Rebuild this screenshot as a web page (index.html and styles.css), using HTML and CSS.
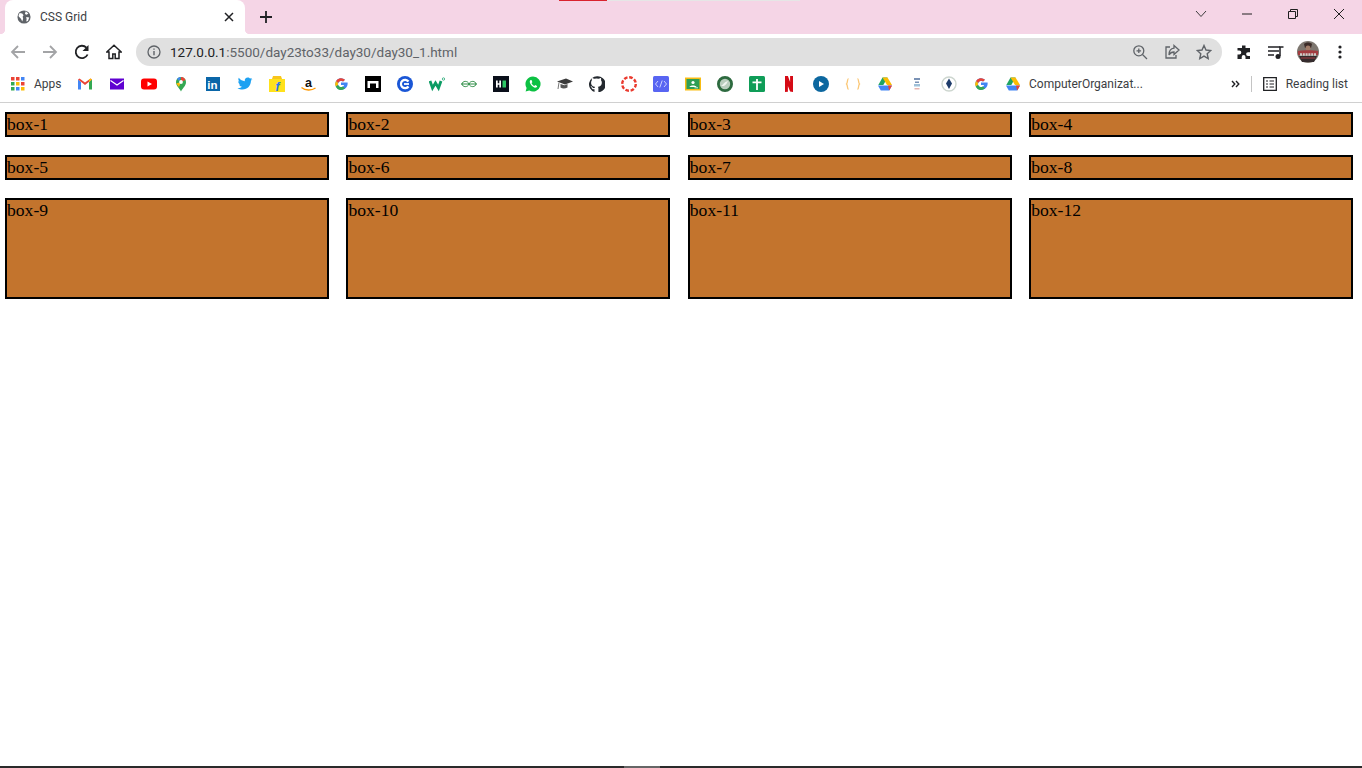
FILE: index.html
```html
<!DOCTYPE html>
<html lang="en">
<head>
  <meta charset="UTF-8" />
  <meta name="viewport" content="width=device-width, initial-scale=1.0" />
  <title>CSS Grid</title>
  <link rel="stylesheet" href="styles.css">
</head>
<body>
  <!-- shared logos -->
  <svg class="sprite">
    <symbol id="google" viewBox="0 0 16 16">
      <path d="M8 6.500h6.600c.5 3.900-2.200 7.300-6.600 7.300A5.800 5.800 0 1 1 12 3.700l-1.900 1.900A3.100 3.100 0 1 0 11.100 9H8z" fill="#4285f4"/>
      <path d="M3 5.100A5.800 5.800 0 0 1 12 3.700l-1.900 1.900A3.100 3.100 0 0 0 5.100 6.900z" fill="#ea4335"/>
      <path d="M2.700 10.500A5.800 5.800 0 0 1 3 5.100l2.100 1.800a3.100 3.100 0 0 0 0 2z" fill="#fbbc05"/>
      <path d="M2.700 10.500l2.400-1.600a3.100 3.100 0 0 0 4.800 1.600l2.200 1.800A5.800 5.800 0 0 1 2.700 10.500z" fill="#34a853"/>
    </symbol>
    <symbol id="drive" viewBox="0 0 16 16">
      <path d="M5.500 1.500h5L6.300 9H1.300z" fill="#1fa463"/>
      <path d="M10.500 1.500L15 9h-5L5.500 1.500z" fill="#fbbc04"/>
      <path d="M3.800 14.500L1 9.500h14l-2.800 5z" fill="#4285f4"/>
      <path d="M11 9.500h4l-2.800 5z" fill="#ea4335"/>
    </symbol>
  </svg>

  <div class="strip"><span class="strip-red"></span></div>

  <header class="titlebar">
    <div class="tab">
      <svg class="tab-icon" viewBox="0 0 16 16">
        <circle cx="8" cy="8" r="7.500" fill="#5f6368"/>
        <path d="M3 3.500l3 .5 1.500 2-1 1.500L7 10l-1 3-1.500-3L2 7.500 1.800 6zM10 1.500l3 2.500-2 1.500-2-1zM10.500 8l3.500.5-1.500 4-2 .5 .5-2.500z" fill="#fff"/>
      </svg>
      <span class="tab-title">CSS Grid</span>
      <svg class="tab-close" viewBox="0 0 10 10"><path d="M1 1l8 8M9 1l-8 8" stroke="#202124" stroke-width="1.500"/></svg>
    </div>
    <div class="new-tab">
      <svg viewBox="0 0 12 12"><path d="M6 0v12M0 6h12" stroke="#202124" stroke-width="1.800"/></svg>
    </div>
    <div class="win-controls">
      <div class="win-btn"><svg viewBox="0 0 12 12"><path d="M1 3l5 5.500L11 3" fill="none" stroke="#3c3c3c"/></svg></div>
      <div class="win-btn"><svg viewBox="0 0 12 12"><path d="M1 6h10" stroke="#202020"/></svg></div>
      <div class="win-btn"><svg viewBox="0 0 12 12"><path d="M1.500 3.500h7v7h-7zM3.500 3.500v-2h7v7h-2" fill="none" stroke="#202020"/></svg></div>
      <div class="win-btn"><svg viewBox="0 0 12 12"><path d="M1 1l10 10M11 1L1 11" stroke="#202020"/></svg></div>
    </div>
  </header>

  <nav class="toolbar">
    <div class="tool"><svg viewBox="0 0 16 16"><path d="M15 8H2M8 2L2 8l6 6" fill="none" stroke="#a3a4a6" stroke-width="1.800"/></svg></div>
    <div class="tool"><svg viewBox="0 0 16 16"><path d="M1 8h13M8 2l6 6-6 6" fill="none" stroke="#a3a4a6" stroke-width="1.800"/></svg></div>
    <div class="tool"><svg viewBox="0 0 16 16"><path d="M13.600 10.500A6.200 6.200 0 1 1 12.400 3.600" fill="none" stroke="#202124" stroke-width="1.800"/><path d="M14.500 1v6h-6z" fill="#202124"/></svg></div>
    <div class="tool"><svg viewBox="0 0 16 16"><path d="M8 1.200L.8 8H3v6.500h3.800V10h2.400v4.500H13V8h2.200z" fill="none" stroke="#202124" stroke-width="1.500"/></svg></div>
    <div class="omnibox">
      <svg class="omni-info" viewBox="0 0 14 14"><circle cx="7" cy="7" r="6" fill="none" stroke="#5f6368" stroke-width="1.300"/><path d="M7 6v4.200M7 3.500v1.300" stroke="#5f6368" stroke-width="1.400"/></svg>
      <div class="url"><span class="url-host">127.0.0.1</span>:5500/day23to33/day30/day30_1.html</div>
      <div class="omni-actions">
        <svg viewBox="0 0 16 16"><circle cx="6.800" cy="6.800" r="5" fill="none" stroke="#5f6368" stroke-width="1.300"/><path d="M10.500 10.500l4.500 4.500M4.500 6.800h4.600M6.800 4.500v4.600" stroke="#5f6368" stroke-width="1.300"/></svg>
        <svg viewBox="0 0 16 16"><path d="M6 3H2v11h10v-3" fill="none" stroke="#5f6368" stroke-width="1.300"/><path d="M10 1.500L15 6l-5 4.500V8C7.500 8 6 9 5 11c0-4 2-6.500 5-6.800z" fill="none" stroke="#5f6368" stroke-width="1.300"/></svg>
        <svg viewBox="0 0 16 16"><path d="M8 1.500l2 4.500 4.800.5-3.600 3.200 1 4.800L8 12.100l-4.200 2.400 1-4.800L1.200 6.500 6 6z" fill="none" stroke="#5f6368" stroke-width="1.400"/></svg>
      </div>
    </div>
    <div class="tool"><svg viewBox="0 0 16 16"><path d="M6 1.500h3.500V4H14v4.200h-2a1.900 1.900 0 0 0 0 3.800h2V15H9.500v-2a1.900 1.900 0 0 0-3.800 0v2H1.500v-4.500h1.800a2 2 0 0 0 0-4H1.500V4H6z" fill="#202124"/></svg></div>
    <div class="tool"><svg viewBox="0 0 16 16"><path d="M0 3h12M0 7h11M0 11h6" stroke="#202124" stroke-width="1.500"/><circle cx="10" cy="12.500" r="2.500" fill="#202124"/><path d="M12 12V3h3.500" fill="none" stroke="#202124" stroke-width="1.500"/></svg></div>
    <div class="tool">
      <svg class="avatar" viewBox="0 0 22 22">
        <circle cx="11" cy="11" r="11" fill="#7d766f"/>
        <path d="M7 3c2-2 6-2 8 0l-1 4H8z" fill="#3d2c28"/>
        <circle cx="11" cy="7" r="2.500" fill="#a27c68"/>
        <path d="M1 10c3-1 17-1 20 0v4H1z" fill="#a33c40"/>
        <path d="M3 13.500h16" stroke="#d0ccc8" stroke-width="2.500" stroke-dasharray="2 .8"/>
        <path d="M2 15h18l-3 6H5z" fill="#352c2e"/>
        <path d="M4 17h14" stroke="#a33c40"/>
      </svg>
    </div>
    <div class="tool"><svg viewBox="0 0 16 16"><circle cx="8" cy="3" r="1.600" fill="#202124"/><circle cx="8" cy="8" r="1.600" fill="#202124"/><circle cx="8" cy="13" r="1.600" fill="#202124"/></svg></div>
  </nav>

  <nav class="bookmarks">
    <div class="mark mark-apps">
      <svg viewBox="0 0 14 14">
        <path d="M0 0h3.500v3.500H0z" fill="#ea4335"/><path d="M5 0h3.500v3.500H5z" fill="#ea4335"/><path d="M10 0h3.500v3.500H10z" fill="#4285f4"/>
        <path d="M0 5h3.500v3.500H0z" fill="#34a853"/><path d="M5 5h3.500v3.500H5z" fill="#fbbc05"/><path d="M10 5h3.500v3.500H10z" fill="#ea4335"/>
        <path d="M0 10h3.500v3.500H0z" fill="#34a853"/><path d="M5 10h3.500v3.500H5z" fill="#4285f4"/><path d="M10 10h3.500v3.500H10z" fill="#fbbc05"/>
      </svg>
      <span class="mark-label">Apps</span>
    </div>
    <div class="mark"><svg viewBox="0 0 16 16"><path d="M1 3.500v10h3V6z" fill="#4285f4"/><path d="M15 3.500v10h-3V6z" fill="#34a853"/><path d="M1 3.500L8 9l7-5.500-1.500-1L8 6.500l-5.500-4z" fill="#ea4335"/><path d="M12 6l3-2.500-1.500-1L12 3.500z" fill="#fbbc05"/></svg></div>
    <div class="mark"><svg viewBox="0 0 16 16"><path d="M1 2.500h14v11H1z" fill="#5f01d1"/><path d="M1.500 4.500L8 9l6.500-4.500" fill="none" stroke="#fff" stroke-width="1.200"/></svg></div>
    <div class="mark"><svg viewBox="0 0 16 16"><rect y="2.500" width="16" height="11" rx="3" fill="#f00"/><path d="M6.500 5.500L11 8l-4.500 2.500z" fill="#fff"/></svg></div>
    <div class="mark"><svg viewBox="0 0 16 16"><path d="M8 15.500C6 11.500 3 10 3 6a5 5 0 0 1 10 0c0 4-3 5.500-5 9.500z" fill="#34a853"/><path d="M4 2.800A5 5 0 0 1 8 1l-2 4z" fill="#4285f4"/><path d="M8 1a5 5 0 0 1 4.500 3L8 6z" fill="#ea4335"/><path d="M3.200 7.500L8 6l-2 5z" fill="#fbbc05"/><circle cx="8" cy="6" r="1.900" fill="#fff"/></svg></div>
    <div class="mark"><svg viewBox="0 0 16 16"><rect x="1" y="1" width="14" height="14" fill="#0a66a8"/><text class="logo-text" x="2.300" y="12.800" font-size="11.500" fill="#fff">in</text></svg></div>
    <div class="mark"><svg viewBox="0 0 16 16"><path d="M15.500 3.500l-1.500 1c0 5-3.500 9-8.500 9-2 0-3.500-.5-5-1.500 2 .2 3.300-.3 4.500-1.200C3.500 10.500 2.500 9.500 2 8.500h1.400C2 8 1.200 6.500 1.200 5.200l1.300.4C1.300 4.500 1 3 1.800 1.800 3.500 4 5.500 5 7.800 5.200 7.300 3 9 1.500 10.800 1.500c1 0 1.800.5 2.300 1l1.800-.6-1 1.700z" fill="#1da1f2"/></svg></div>
    <div class="mark"><svg viewBox="0 0 16 16"><path d="M0 3h16v13H0z" fill="#ffe11b"/><path d="M3 3L4 0h8l1 3z" fill="#f8c51c"/><text class="logo-text" x="6.500" y="14.500" font-size="12" fill="#2874f0" font-style="italic">f</text></svg></div>
    <div class="mark"><svg viewBox="0 0 16 16"><text class="logo-text" x="4" y="11.300" font-size="12.500" fill="#111">a</text><path d="M.5 11.500c4 3.200 10 3.200 14 .5" fill="none" stroke="#f90" stroke-width="1.400"/></svg></div>
    <div class="mark"><svg><use href="#google"/></svg></div>
    <div class="mark"><svg viewBox="0 0 16 16"><path d="M0 0h16v16H0z" fill="#000"/><path d="M2.500 5h11v7h-2.500V7.500H5V12H2.500z" fill="#fff"/></svg></div>
    <div class="mark"><svg viewBox="0 0 16 16"><circle cx="8" cy="8" r="8" fill="#1a56d6"/><path d="M11.500 5.500a4.200 4.200 0 1 0 0 5" fill="none" stroke="#fff" stroke-width="2.200"/><path d="M7 8h5" stroke="#fff" stroke-width="1.800"/></svg></div>
    <div class="mark"><svg viewBox="0 0 16 16"><path d="M1 5l2.500 7L6.500 7l3 5L12 5" fill="none" stroke="#0a9c63" stroke-width="2.800"/><circle cx="14.500" cy="3" r="1.200" fill="none" stroke="#0a9c63" stroke-width=".7"/></svg></div>
    <div class="mark"><svg viewBox="0 0 16 16"><path d="M0 8h16" stroke="#2f8d46" stroke-width="1"/><path d="M8 8C7 4.500 1.500 4.500 1 8c.5 3.500 6 3.500 7 0zM8 8c1-3.500 6.500-3.500 7 0-.5 3.500-6 3.500-7 0z" fill="none" stroke="#2f8d46" stroke-width="1"/></svg></div>
    <div class="mark"><svg viewBox="0 0 16 16"><path d="M0 0h16v16H0z" fill="#0a0f1a"/><path d="M3 4.500h1.700v2.700h1.600V4.500H8v7H6.300V8.800H4.700v2.700H3z" fill="#fff"/><path d="M9.500 4.500H13v7H9.500z" fill="#2ec866"/></svg></div>
    <div class="mark"><svg viewBox="0 0 16 16"><path d="M8 .5a7.500 7.500 0 0 0-6.400 11.400L.6 15.500l3.700-1A7.500 7.500 0 1 0 8 .5z" fill="#0cc143"/><path d="M5.500 4c-1.200 1-1 2.800.5 4.800s3.500 3.300 5 2.800c1-.4 1.300-1.300 1-1.700l-1.800-1-.9 1c-1.200-.4-2.300-1.500-2.800-2.800l.9-.8L6.500 4z" fill="#fff"/></svg></div>
    <div class="mark"><svg viewBox="0 0 16 16"><path d="M0 5.500l9-3 7 3-8 3z" fill="#3a3a3a"/><path d="M3.500 8v3.500c2 1.200 4.500 1.200 7 0V8L7.500 9.200z" fill="#555"/><path d="M2 6.500L1 13" stroke="#777"/></svg></div>
    <div class="mark"><svg viewBox="0 0 16 16"><path fill-rule="evenodd" d="M8 .3a8 8 0 0 0-2.500 15.600v-2.700c-2.200.5-2.700-1-2.800-1.500-.3-.6-.7-.9-1-1.100-.4-.2 0-.4.3-.4.700 0 1.200.7 1.400 1 .8 1.300 2 .9 2.200.7 0-.5.300-.9.500-1.100-2-.2-4-.9-4-4.300 0-.9.300-1.700.8-2.300 0-.3-.4-1.100.1-2.300 0 0 .7-.2 2.300.9a8 8 0 0 1 4.300 0c1.600-1.100 2.300-.9 2.300-.9.500 1.200.1 2 .1 2.300.5.600.8 1.300.8 2.300 0 3.400-2 4.100-4 4.300.3.300.6.800.6 1.600v3.900A8 8 0 0 0 8 .3z" fill="#24292f"/></svg></div>
    <div class="mark"><svg viewBox="0 0 16 16"><circle cx="8" cy="8" r="6.800" fill="none" stroke="#ea3a2e" stroke-width="2.400" stroke-dasharray="3.600 1.740"/></svg></div>
    <div class="mark"><svg viewBox="0 0 16 16"><rect width="16" height="16" rx="1.500" fill="#5865f2"/><path d="M5 5L2.500 8 5 11M11 5l2.500 3L11 11M9.200 4.500L6.800 11.500" fill="none" stroke="#d8dcff" stroke-width=".9"/></svg></div>
    <div class="mark"><svg viewBox="0 0 16 16"><path d="M0 1.500h16v13H0z" fill="#f8bc13"/><path d="M1.500 3h13v10h-13z" fill="#2f9e55"/><circle cx="8" cy="6.500" r="1.600" fill="#fff"/><path d="M4.500 11c.5-2 6.500-2 7 0z" fill="#fff"/><path d="M9.500 11.800h3.500" stroke="#fff" stroke-width=".8"/></svg></div>
    <div class="mark"><svg viewBox="0 0 16 16"><circle cx="8" cy="8" r="6.600" fill="#b9cdbd" stroke="#2d6a3f" stroke-width="2.800"/><path d="M4 10c2-1 3-4 7-5-1 2-2 4-4 5z" fill="#eef3ee"/></svg></div>
    <div class="mark"><svg viewBox="0 0 16 16"><rect width="16" height="16" rx="1.500" fill="#0f9d58"/><path d="M8 3v11M3.500 6.300h9" stroke="#fff" stroke-width="1.800"/></svg></div>
    <div class="mark"><svg viewBox="0 0 16 16"><path d="M4 0h2.900l2.200 6V0H12v16l-2.900-.4L6.900 10v5.700L4 16z" fill="#d50a15"/></svg></div>
    <div class="mark"><svg viewBox="0 0 16 16"><circle cx="8" cy="8" r="8" fill="#0c679f"/><path d="M6 5l5 3-5 3z" fill="#fff"/></svg></div>
    <div class="mark"><svg viewBox="0 0 16 16"><path d="M3.500 2.500C2 3 3 6.500 1.500 8 3 9.500 2 13 3.500 13.500M12.500 2.500C14 3 13 6.500 14.500 8 13 9.500 14 13 12.500 13.500" fill="none" stroke="#fbc878" stroke-width="1.300"/></svg></div>
    <div class="mark"><svg><use href="#drive"/></svg></div>
    <div class="mark"><svg viewBox="0 0 16 16"><path d="M5 2h6v2H5zM6 5.500h4v1.500H6z" fill="#7a92b5"/><path d="M5 8h6v2.500H5z" fill="#9fc0d8"/><path d="M5.500 12h5v1.500h-5z" fill="#e5b5b0"/></svg></div>
    <div class="mark"><svg viewBox="0 0 16 16"><circle cx="8" cy="8" r="7" fill="#fff" stroke="#cdd6cf" stroke-width="1.400"/><path d="M8 2.500L11 7.500 8 13 5 7.500z" fill="#1f3d6b"/></svg></div>
    <div class="mark"><svg><use href="#google"/></svg></div>
    <div class="mark"><svg><use href="#drive"/></svg></div>
    <span class="mark-label mark-long">ComputerOrganizat...</span>
    <div class="bookmarks-end">
      <svg class="more" viewBox="0 0 10 8"><path d="M1 1l2.800 3L1 7M5 1l2.800 3L5 7" fill="none" stroke="#202124" stroke-width="1.400"/></svg>
      <span class="sep"></span>
      <svg class="reading-icon" viewBox="0 0 14 14"><path d="M.7.7h12.600v12.600H.7z" fill="none" stroke="#202124" stroke-width="1.300"/><path d="M3 4h2M6.500 4h4.500M3 7h2M6.500 7h4.500M3 10h2M6.500 10h4.500" stroke="#202124" stroke-width="1.200"/></svg>
      <span class="mark-label reading-label">Reading list</span>
    </div>
  </nav>

  <main class="container">
    <div class="box">box-1</div>
    <div class="box">box-2</div>
    <div class="box">box-3</div>
    <div class="box">box-4</div>
    <div class="box">box-5</div>
    <div class="box">box-6</div>
    <div class="box">box-7</div>
    <div class="box">box-8</div>
    <div class="box">box-9</div>
    <div class="box">box-10</div>
    <div class="box">box-11</div>
    <div class="box">box-12</div>
  </main>

  <footer class="taskbar"><span class="taskbar-item"></span></footer>
</body>
</html>
```

FILE: styles.css
```css
* {
  box-sizing: border-box;
}

html, body {
  height: 100%;
}

body {
  margin: 0;
  display: flex;
  flex-direction: column;
  background-color: #fff;
  font-family: Roboto, "Noto Sans", sans-serif;
  overflow: hidden;
}

svg {
  display: block;
}

.sprite {
  display: none;
}

.logo-text {
  font-family: "Liberation Sans", sans-serif;
  font-weight: bold;
}

/* thin loading strip on top of the window */
.strip {
  position: absolute;
  top: 0;
  left: 559px;
  width: 241px;
  height: 1px;
  background-color: #e6e6e6;
}

.strip-red {
  display: block;
  width: 48px;
  height: 1px;
  background-color: #d9232e;
}

.titlebar {
  display: flex;
  height: 34px;
  flex: none;
  background-color: #f5d5e6;
}

.tab {
  position: relative;
  display: flex;
  align-items: center;
  width: 240px;
  margin-left: 5px;
  padding: 0 11px 0 12px;
  background-color: #fff;
  border-radius: 8px 8px 0 0;
}

.tab::before,
.tab::after {
  content: "";
  position: absolute;
  bottom: 0;
  width: 5px;
  height: 5px;
}

.tab::before {
  left: -5px;
  background: radial-gradient(circle at 0 0, #f5d5e6 5px, #fff 5.500px);
}

.tab::after {
  right: -5px;
  background: radial-gradient(circle at 100% 0, #f5d5e6 5px, #fff 5.500px);
}

.tab-icon {
  width: 14px;
  height: 14px;
}

.tab-title {
  margin-left: 9px;
  flex: 1;
  font-size: 12px;
  color: #3c4043;
}

.tab-close {
  width: 10px;
  height: 10px;
}

.new-tab {
  display: flex;
  align-items: center;
  margin-left: 15px;
}

.new-tab svg {
  width: 12px;
  height: 12px;
}

.win-controls {
  display: flex;
  margin-left: auto;
  height: 28px;
}

.win-btn {
  display: flex;
  align-items: center;
  justify-content: center;
  width: 46px;
}

.win-btn svg {
  width: 12px;
  height: 12px;
}

.toolbar {
  display: flex;
  flex: none;
  align-items: center;
  height: 32px;
  padding: 4px 6px 0 2px;
}

.tool {
  display: flex;
  align-items: center;
  justify-content: center;
  width: 32px;
  height: 28px;
}

.tool svg {
  width: 16px;
  height: 16px;
}

.tool .avatar {
  width: 22px;
  height: 22px;
}

.omnibox {
  display: flex;
  align-items: center;
  width: 1086px;
  height: 28px;
  margin-left: 6px;
  margin-right: 6px;
  padding: 0 10px 0 11px;
  background-color: #e0e0e0;
  border-radius: 14px;
}

.omni-info {
  width: 14px;
  height: 14px;
}

.url {
  flex: 1;
  margin-left: 9px;
  font-size: 13.500px;
  color: #5f6368;
}

.url-host {
  color: #202124;
}

.omni-actions {
  display: flex;
  gap: 16px;
}

.omni-actions svg {
  width: 16px;
  height: 16px;
}

.bookmarks {
  display: flex;
  flex: none;
  align-items: center;
  height: 37px;
  padding: 0 0 1px 1px;
  border-bottom: 1px solid #d0d0d0;
}

.mark {
  display: flex;
  align-items: center;
  justify-content: center;
  width: 32px;
  height: 28px;
}

.mark svg {
  width: 16px;
  height: 16px;
}

.mark-apps {
  width: 68px;
  justify-content: flex-start;
  padding-left: 10px;
}

.mark-apps svg {
  width: 14px;
  height: 14px;
  flex: none;
}

.mark-apps .mark-label {
  margin-left: 9px;
}

.mark-label {
  font-size: 12px;
  color: #3c4043;
}

.mark-long {
  white-space: nowrap;
}

.bookmarks-end {
  display: flex;
  align-items: center;
  margin-left: auto;
  padding-right: 14px;
}

.more {
  width: 10px;
  height: 8px;
}

.sep {
  width: 1px;
  height: 16px;
  margin: 0 11px 0 10px;
  background-color: #c4c4c4;
}

.reading-icon {
  width: 14px;
  height: 14px;
}

.reading-label {
  margin-left: 9px;
}

.container {
  flex: 1;
  display: grid;
  grid-template-columns: repeat(4, 1fr);
  grid-template-rows: 25px 25px 101px;
  align-content: start;
  gap: 18px 17.600px;
  padding: 9px 9px 0 5px;
}

.box {
  border: 2px solid #000;
  background-color: #c3742d;
  font-family: "Liberation Serif", serif;
  font-size: 17.600px;
  color: #000;
}

.taskbar {
  flex: none;
  height: 2px;
  padding-left: 624px;
  background-color: #2a2a2a;
}

.taskbar-item {
  display: block;
  width: 36px;
  height: 2px;
  background-color: #666;
}
```
